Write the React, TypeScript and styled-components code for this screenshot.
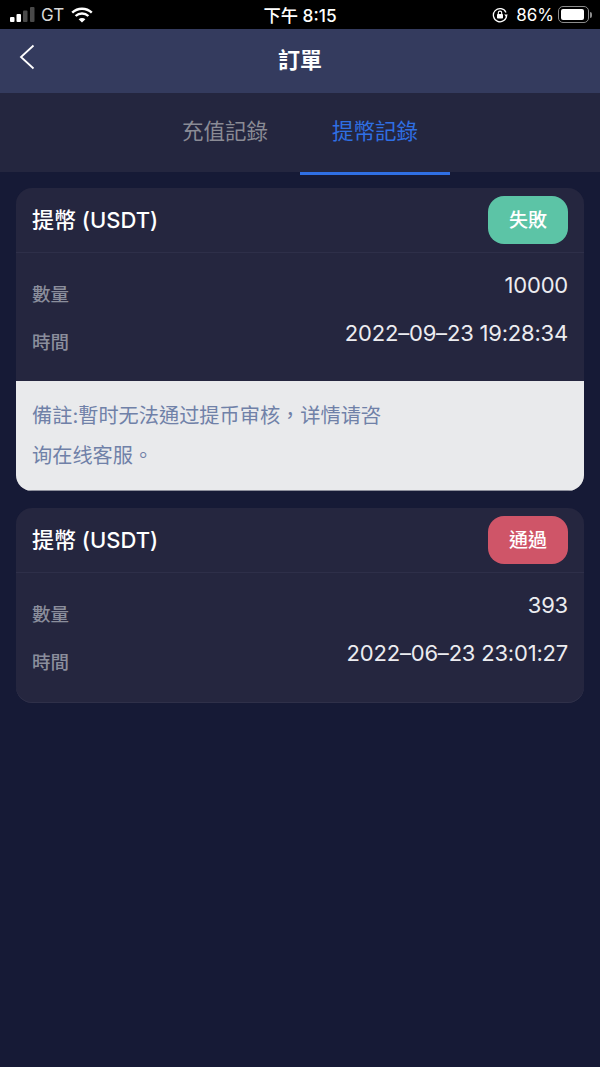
import styled, { createGlobalStyle } from "styled-components";

const GlobalStyle = createGlobalStyle`
  html, body {
    margin: 0;
    padding: 0;
    background: #161a36;
  }
  body {
    font-family: Inter, "Noto Sans CJK TC", "Noto Sans CJK SC", sans-serif;
  }
`;

interface IOrder {
  amount: string;
  time: string;
  status: string;
  statusColor: string;
  note?: string[];
}

const orders: IOrder[] = [
  {
    amount: "10000",
    time: "2022–09–23 19:28:34",
    status: "失敗",
    statusColor: "#5cc4a6",
    note: ["備註:暫时无法通过提币审核，详情请咨", "询在线客服。"],
  },
  {
    amount: "393",
    time: "2022–06–23 23:01:27",
    status: "通過",
    statusColor: "#cf5568",
  },
];

function SignalIcon() {
  return (
    <svg width="25" height="15" viewBox="0 0 25 15">
      <rect x="0" y="10" width="4.5" height="5" rx="1" fill="#fff" />
      <rect x="6.5" y="7" width="4.5" height="8" rx="1" fill="#fff" />
      <rect x="13" y="3.5" width="4.5" height="11.5" rx="1" fill="#4a4a4a" />
      <rect x="20" y="0" width="4.5" height="15" rx="1" fill="#4a4a4a" />
    </svg>
  );
}

function WifiIcon() {
  return (
    <svg width="22" height="16" viewBox="0 0 22 16" fill="none" stroke="#fff" strokeWidth="2.4">
      <path d="M1.2 5.6C6.6 0.4 15.4 0.4 20.8 5.6" />
      <path d="M4.6 9C8.2 5.6 13.8 5.6 17.4 9" />
      <path d="M11 15.6L7.6 12.2C9.5 10.5 12.5 10.5 14.4 12.2Z" fill="#fff" stroke="none" />
    </svg>
  );
}

function RotationLockIcon() {
  return (
    <svg width="16" height="16" viewBox="0 0 16 16" fill="none">
      <path d="M14 5.4A6.6 6.6 0 1 0 14.6 8" stroke="#fff" strokeWidth="1.3" />
      <path d="M12.2 7.6h3.6l-1.8 2.2Z" fill="#fff" />
      <rect x="5" y="7" width="6" height="4.6" rx="0.8" fill="#fff" />
      <path d="M6.3 7V5.8a1.7 1.7 0 0 1 3.4 0V7" stroke="#fff" strokeWidth="1.1" />
    </svg>
  );
}

function BatteryIcon() {
  return (
    <Battery>
      <BatteryShell>
        <BatteryFill />
      </BatteryShell>
      <BatteryCap />
    </Battery>
  );
}

export default function App() {
  return (
    <Page>
      <GlobalStyle />
      <StatusBar>
        <StatusSide>
          <SignalIcon />
          <Carrier>GT</Carrier>
          <WifiIcon />
        </StatusSide>
        <StatusTime>下午 8:15</StatusTime>
        <StatusSide $right>
          <RotationLockIcon />
          <BatteryText>86%</BatteryText>
          <BatteryIcon />
        </StatusSide>
      </StatusBar>
      <NavBar>
        <BackButton>
          <svg width="16" height="26" viewBox="0 0 16 26" fill="none" stroke="#fff" strokeWidth="1.8">
            <path d="M14.5 1.5L2 13l12.5 11.5" />
          </svg>
        </BackButton>
        <NavTitle>訂單</NavTitle>
      </NavBar>
      <Tabs>
        <Tab>充值記錄</Tab>
        <Tab $active>提幣記錄</Tab>
      </Tabs>
      <List>
        {orders.map((order) => (
          <Card key={order.time}>
            <CardHeader>
              <CardTitle>提幣 (USDT)</CardTitle>
              <StatusBadge $color={order.statusColor}>{order.status}</StatusBadge>
            </CardHeader>
            <CardBody>
              <Row>
                <RowLabel>數量</RowLabel>
                <RowValue>{order.amount}</RowValue>
              </Row>
              <Row>
                <RowLabel>時間</RowLabel>
                <RowValue>{order.time}</RowValue>
              </Row>
            </CardBody>
            {order.note && (
              <Note>
                {order.note.map((line) => (
                  <NoteLine key={line}>{line}</NoteLine>
                ))}
              </Note>
            )}
          </Card>
        ))}
      </List>
    </Page>
  );
}

const Page = styled.div`
  width: 600px;
  height: 1067px;
  overflow: hidden;
  background: #161a36;
  display: flex;
  flex-direction: column;
`;

const StatusBar = styled.div`
  height: 29px;
  flex: none;
  background: #000;
  color: #fff;
  display: grid;
  grid-template-columns: 1fr auto 1fr;
  align-items: center;
  padding: 0 8px 0 10px;
`;

const StatusSide = styled.div<{ $right?: boolean }>`
  display: flex;
  align-items: center;
  justify-content: ${(p) => (p.$right ? "flex-end" : "flex-start")};
  gap: 6px;
`;

const Carrier = styled.span`
  font-size: 17px;
  color: #d8d8d8;
  margin-right: 1px;
`;

const StatusTime = styled.span`
  font-size: 17.3px;
  font-weight: 500;
  margin-right: 2px;
`;

const BatteryText = styled.span`
  font-size: 17px;
  margin: 0 -2px 0 2px;
`;

const Battery = styled.div`
  display: flex;
  align-items: center;
  gap: 1px;
`;

const BatteryShell = styled.div`
  box-sizing: border-box;
  width: 31px;
  height: 17px;
  padding: 2px;
  border: 1px solid #8c8c8c;
  border-radius: 5px;
`;

const BatteryFill = styled.div`
  width: 23px;
  height: 100%;
  background: #fff;
  border-radius: 2px;
`;

const BatteryCap = styled.div`
  width: 2px;
  height: 6px;
  background: #8c8c8c;
  border-radius: 0 2px 2px 0;
`;

const NavBar = styled.div`
  position: relative;
  box-sizing: border-box;
  height: 64px;
  flex: none;
  padding-bottom: 6px;
  background: #343b5e;
  display: flex;
  align-items: center;
  justify-content: center;
`;

const BackButton = styled.div`
  position: absolute;
  left: 19px;
  top: 15px;
  line-height: 0;
`;

const NavTitle = styled.div`
  font-size: 22px;
  font-weight: 700;
  color: #fff;
`;

const Tabs = styled.div`
  height: 79px;
  flex: none;
  background: #24263f;
  display: flex;
  justify-content: center;
`;

const Tab = styled.div<{ $active?: boolean }>`
  position: relative;
  box-sizing: border-box;
  width: 150px;
  padding-bottom: 6px;
  display: flex;
  align-items: center;
  justify-content: center;
  font-size: 21.5px;
  color: ${(p) => (p.$active ? "#2f6fe4" : "#8a8b95")};

  &::after {
    content: "";
    display: ${(p) => (p.$active ? "block" : "none")};
    position: absolute;
    left: 0;
    right: 0;
    bottom: -3px;
    height: 3px;
    background: #2f6fe4;
  }
`;

const List = styled.div`
  display: flex;
  flex-direction: column;
  gap: 17px;
  padding: 16px 16px 0;
`;

const Card = styled.div`
  background: #25263f;
  border-radius: 16px;
  overflow: hidden;
  box-shadow: inset 0 -1px 0 #2f3049;

  &:last-child {
    padding-bottom: 2px;
  }
`;

const CardHeader = styled.div`
  height: 64px;
  border-bottom: 1px solid #2e2f49;
  display: flex;
  align-items: center;
  justify-content: space-between;
  padding: 0 16px;
`;

const CardTitle = styled.div`
  font-size: 22px;
  font-weight: 500;
  color: #fff;
  margin-bottom: 4px;
`;

const StatusBadge = styled.div<{ $color: string }>`
  box-sizing: border-box;
  width: 80px;
  height: 48px;
  padding-bottom: 4px;
  border-radius: 16px;
  background: ${(p) => p.$color};
  color: #fff;
  font-size: 19px;
  font-weight: 500;
  display: flex;
  align-items: center;
  justify-content: center;
`;

const CardBody = styled.div`
  display: flex;
  flex-direction: column;
  padding: 8px 16px 16px;
  height: 128px;
  box-sizing: border-box;
`;

const Row = styled.div`
  height: 48px;
  display: flex;
  justify-content: space-between;
  align-items: flex-start;
`;

const RowLabel = styled.div`
  font-size: 18.5px;
  font-weight: 500;
  line-height: 48px;
  margin-top: 8.5px;
  color: #8b8e9c;
`;

const RowValue = styled.div`
  font-size: 22px;
  letter-spacing: -0.2px;
  line-height: 48px;
  color: #ececf0;
`;

const Note = styled.div`
  background: #e9eaec;
  padding: 15px 16px 6px;
  height: 110px;
  box-sizing: border-box;
  border-bottom: 1px solid #8d8f9c;
`;

const NoteLine = styled.div`
  font-size: 20.2px;
  line-height: 40px;
  color: #7081a8;
`;
